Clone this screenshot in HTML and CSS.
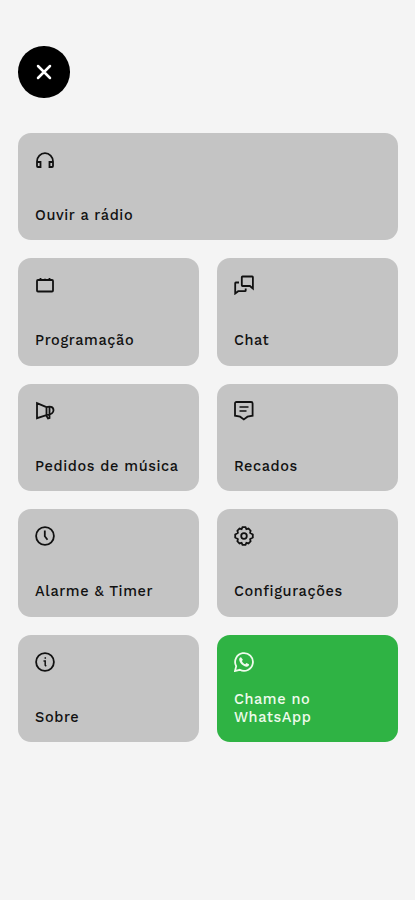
FILE: index.html
```
<!DOCTYPE html>
<html lang="pt-BR">
<head>
<meta charset="UTF-8">
<meta name="viewport" content="width=device-width, initial-scale=1.0">
<title>Menu</title>
<link rel="stylesheet" href="styles.css">
</head>
<body>
<div class="menu">
  <button class="close" aria-label="Fechar">
    <svg width="16" height="16" viewBox="0 0 16 16"><path d="M2 2l12 12M14 2L2 14"/></svg>
  </button>
  <nav class="grid">
    <a class="card wide">
      <svg class="icon" viewBox="0 0 20 20"><path d="M2 16v-4.500a8 8.300 0 0 1 16 0V16q0 1-1 1h-2.500v-5H18M2 12h3.500v5H3q-1 0-1-1"/></svg>
      <span>Ouvir a rádio</span>
    </a>
    <a class="card">
      <svg class="icon" viewBox="0 0 20 20"><path d="M3 5h14q1 0 1 1v9.500q0 1-1 1H3q-1 0-1-1V6q0-1 1-1M5.500 3v3M14.500 3v3"/><path class="thin" d="M10 3.500v2"/></svg>
      <span>Programação</span>
    </a>
    <a class="card">
      <svg class="icon" viewBox="0 0 20 20"><path d="M8.500 1.500h9.700q.7 0 .7.700v11.300l-3-2.500h-7.400q-.7 0-.7-.7V2.200q0-.7.700-.7zM5 7.500H1.900q-.7 0-.7.700v10.300l3-2.300h6.800q.7 0 .7-.7v-2"/></svg>
      <span>Chat</span>
    </a>
    <a class="card">
      <svg class="icon" viewBox="0 0 20 20"><path d="M2 2.200l9.500 4v8L2 17.200zM11.500 6.200c3-1.200 7-.7 7 3 0 3-3.500 4.500-7 5M11.300 14.500l1.700 3 1.500-.5V6.500"/></svg>
      <span>Pedidos de música</span>
    </a>
    <a class="card">
      <svg class="icon" viewBox="0 0 20 20"><path d="M2.500 1h14.600q1.500 0 1.500 1.500v12.200l-5.100 1-3.700 2.700-3.700-2.700-5.100-1V2.500q0-1.500 1.500-1.500z"/><path class="line" d="M5.500 6h9M5.500 10h7"/></svg>
      <span>Recados</span>
    </a>
    <a class="card">
      <svg class="icon" viewBox="0 0 20 20"><circle cx="10" cy="10" r="8.900"/><path d="M9.800 4.500v5.800l2.700 3.400"/></svg>
      <span>Alarme &amp; Timer</span>
    </a>
    <a class="card">
      <svg class="icon" viewBox="0 0 20 20"><path d="M8.500 1.200h3l.9 2 2.100-.6 2.100 2.100-.5 2.200 2.700 1.600v3l-2.700 1.600.5 2.200-2.100 2.100-2.100-.6-.9 2h-3l-.9-2-2.100.6-2.100-2.100.5-2.200-2.700-1.600v-3l2.700-1.600-.5-2.200 2.100-2.100 2.100.6z"/><circle cx="10" cy="10" r="2.800"/></svg>
      <span>Configurações</span>
    </a>
    <a class="card">
      <svg class="icon" viewBox="0 0 20 20"><circle cx="10" cy="10" r="8.900"/><path class="line" d="M10.300 5.300v1.500M8.500 9h1.700v4.300l1 1"/></svg>
      <span>Sobre</span>
    </a>
    <a class="card whatsapp">
      <svg class="icon" viewBox="0 0 20 20"><path d="M1 19l1.200-4.800A8.900 8.900 0 1 1 5.800 17.800z"/><path class="fill" d="M7 5.200c-.8-.1-2 1-1.800 2.500.4 3.400 4.300 6.800 7.300 7 1.600 0 2.700-1.200 2.500-2.500l-2.500-1.300-1.300 1.300c-1.500-.6-2.700-1.700-3.300-3.200l1-1.200z"/></svg>
      <span>Chame no WhatsApp</span>
    </a>
  </nav>
</div>
</body>
</html>
```
FILE: styles.css
```
body {
  margin: 0;
  background-color: #f4f4f4;
  color: #111;
  font-family: 'Work Sans', Inter, sans-serif;
}
.menu {
  padding: 46px 17px 0 18px;
}
.close {
  display: flex;
  align-items: center;
  justify-content: center;
  width: 51.500px;
  height: 51.500px;
  padding: 0;
  margin-bottom: 35.200px;
  border: none;
  border-radius: 50%;
  background-color: #000;
  cursor: pointer;
}
.close svg {
  fill: none;
  stroke: #fff;
  stroke-width: 2.500;
  stroke-linecap: round;
}
.grid {
  display: grid;
  grid-template-columns: 1fr 1fr;
  grid-auto-rows: 107.700px;
  gap: 17.800px;
}
.card {
  display: flex;
  flex-direction: column;
  justify-content: space-between;
  box-sizing: border-box;
  padding: 17px 17px 16px;
  border-radius: 13px;
  background-color: #c4c4c4;
  font-size: 14.500px;
  font-weight: 500;
  line-height: 17.500px;
  letter-spacing: 0.6px;
  cursor: pointer;
}
.card span {
  white-space: nowrap;
}
.wide {
  grid-column: span 2;
}
.icon {
  width: 20px;
  height: 20px;
  fill: none;
  stroke: #111;
  stroke-width: 1.800;
}
.icon .thin {
  stroke-width: 1;
}
.icon .line {
  stroke-width: 1.500;
}
.whatsapp {
  background-color: #2fb344;
  color: #effbed;
}
.whatsapp span {
  width: 90px;
  white-space: normal;
}
.whatsapp .icon {
  stroke: #effbed;
}
.whatsapp .fill {
  fill: #effbed;
  stroke: none;
}
```
